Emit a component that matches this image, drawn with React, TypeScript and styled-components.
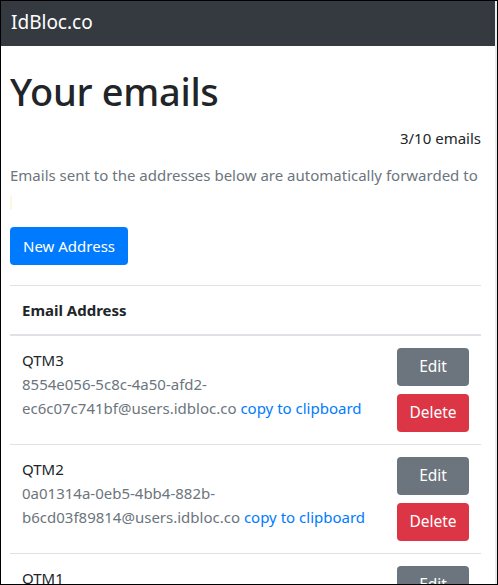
import * as React from 'react';
import styled, { createGlobalStyle } from 'styled-components';

const GlobalStyle = createGlobalStyle`
	html, body {
		margin: 0;
		padding: 0;
		background: #fff;
	}
	* {
		box-sizing: border-box;
	}
	body {
		font-family: "Noto Sans", "Open Sans", sans-serif;
		font-size: 16px;
		line-height: 1.5;
		color: #212529;
	}
`;

const Frame = styled.div`
	width: 498px;
	height: 585px;
	border: 1px solid #000;
	display: flex;
	flex-direction: row;
	overflow: hidden;
`;

const Main = styled.div`
	flex: 1;
	min-width: 0;
	display: flex;
	flex-direction: column;
`;

const ScrollTrack = styled.div`
	width: 2px;
	background: #ebebeb;
`;

const Navbar = styled.nav`
	height: 45px;
	background: #343a40;
	display: flex;
	align-items: center;
	padding: 0 10px;
	flex-shrink: 0;
`;

const Brand = styled.a`
	color: #fff;
	font-size: 19px;
	text-decoration: none;
	line-height: 1;
	margin-top: -3px;
`;

const Container = styled.div`
	padding: 23px 14px 0 9px;
`;

const Title = styled.h1`
	margin: 0;
	font-size: 38px;
	font-weight: 500;
	line-height: 1.2;
	letter-spacing: -0.3px;
`;

const Counter = styled.div`
	text-align: right;
	margin-top: 12px;
	font-size: 15px;
`;

const Lead = styled.p`
	margin: 14px 0 0;
	color: #6c757d;
	font-size: 15px;
	line-height: 24px;
`;

const EmptyMark = styled.mark`
	display: block;
	width: 2px;
	height: 14px;
	margin: 9px 0 0;
	padding: 0;
	background: #fbf8dc;
`;

const PrimaryButton = styled.button`
	margin-top: 17px;
	height: 38px;
	padding: 0 13px;
	border: none;
	border-radius: 4px;
	background: #007bff;
	color: #fff;
	font-family: inherit;
	font-size: 15px;
	line-height: 1;
	cursor: pointer;
`;

const Table = styled.table`
	width: 100%;
	margin-top: 20px;
	border-collapse: collapse;
`;

const HeadCell = styled.th`
	text-align: left;
	padding: 12px;
	border-top: 1px solid #dee2e6;
	border-bottom: 2px solid #dee2e6;
	font-size: 15px;
	font-weight: 700;
	line-height: 24px;
`;

const Cell = styled.td`
	padding: 12px;
	border-top: 1px solid #dee2e6;
	vertical-align: top;
	font-size: 15px;
	line-height: 24px;
`;

const RowInner = styled.div`
	display: flex;
	gap: 12px;
	align-items: flex-start;
`;

const AddressInfo = styled.div`
	flex: 1;
	min-width: 0;
`;

const Label = styled.div`
	color: #212529;
`;

const Address = styled.span`
	color: #6c757d;
`;

const CopyLink = styled.a`
	color: #007bff;
	text-decoration: none;
	cursor: pointer;
`;

const Actions = styled.div`
	width: 72px;
	display: flex;
	flex-direction: column;
	gap: 8px;
	flex-shrink: 0;
`;

const ActionButton = styled.button<{ $variant: 'edit' | 'delete' }>`
	width: 100%;
	height: 38px;
	border: none;
	border-radius: 4px;
	background: ${(p) => (p.$variant === 'edit' ? '#6c757d' : '#dc3545')};
	color: #fff;
	font-family: inherit;
	font-size: 15.5px;
	line-height: 1;
	cursor: pointer;
`;

const addresses = [
	{ label: 'QTM3', head: '8554e056-5c8c-4a50-afd2-', tail: 'ec6c07c741bf@users.idbloc.co' },
	{ label: 'QTM2', head: '0a01314a-0eb5-4bb4-882b-', tail: 'b6cd03f89814@users.idbloc.co' },
	{ label: 'QTM1', head: '3f2c91d0-7a4e-4c1b-9d3e-', tail: '51a8e2b7c406@users.idbloc.co' },
];

const App: React.FC = () => {
	return (
		<>
			<GlobalStyle />
			<Frame>
				<Main>
					<Navbar>
						<Brand>IdBloc.co</Brand>
					</Navbar>
					<Container>
						<Title>Your emails</Title>
						<Counter>3/10 emails</Counter>
						<Lead>Emails sent to the addresses below are automatically forwarded to</Lead>
						<EmptyMark />
						<PrimaryButton>New Address</PrimaryButton>
						<Table>
							<thead>
								<tr>
									<HeadCell>Email Address</HeadCell>
								</tr>
							</thead>
							<tbody>
								{addresses.map((a) => (
									<tr key={a.label}>
										<Cell>
											<RowInner>
												<AddressInfo>
													<Label>{a.label}</Label>
													<Address>
														{a.head}
														<br />
														{a.tail}
													</Address>{' '}
													<CopyLink>copy to clipboard</CopyLink>
												</AddressInfo>
												<Actions>
													<ActionButton $variant="edit">Edit</ActionButton>
													<ActionButton $variant="delete">Delete</ActionButton>
												</Actions>
											</RowInner>
										</Cell>
									</tr>
								))}
							</tbody>
						</Table>
					</Container>
				</Main>
				<ScrollTrack />
			</Frame>
		</>
	);
};

export default App;
